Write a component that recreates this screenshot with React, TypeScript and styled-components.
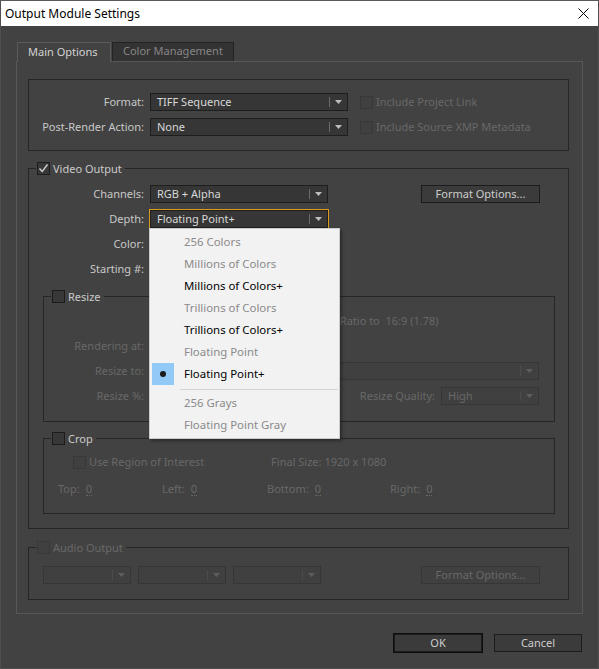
import * as React from 'react'
import styled, { createGlobalStyle, css } from 'styled-components'

const FONT = `'Noto Sans', 'Open Sans', sans-serif`

const GlobalStyle = createGlobalStyle`
  html, body {
    margin: 0;
    padding: 0;
    background: #424242;
  }
  body {
    font-family: ${FONT};
    font-size: 11px;
  }
`

const Window = styled.div`
  width: 599px;
  height: 669px;
  box-sizing: border-box;
  border: 1px solid #4f4f4f;
  border-top-color: #5a5a5a;
  background: #424242;
  display: flex;
  flex-direction: column;
  overflow: hidden;
`

const TitleBar = styled.div`
  height: 25px;
  flex: none;
  background: #ffffff;
  display: flex;
  align-items: center;
  justify-content: space-between;
  padding-left: 4px;
  color: #000;
  font-size: 12px;
`

const CloseIcon = styled.svg`
  margin-right: 9px;
`

const Body = styled.div`
  flex: 1;
  display: flex;
  flex-direction: column;
  padding: 16px 15px 0 15px;
`

const Tabs = styled.div`
  display: flex;
  align-items: flex-start;
  gap: 1px;
  margin-left: 1px;
  margin-bottom: -1px;
  position: relative;
  z-index: 1;
`

const Tab = styled.div<{ $active?: boolean; $w: number }>`
  box-sizing: border-box;
  width: ${(p) => p.$w}px;
  padding-left: 10px;
  font-size: 11px;
  ${(p) =>
    p.$active
      ? css`
          height: 20px;
          line-height: 17px;
          background: #424242;
          color: #d2d2d2;
          border: 1px solid #5a5a5a;
          border-bottom: none;
        `
      : css`
          height: 19px;
          line-height: 16px;
          background: #333333;
          color: #868686;
          border: 1px solid #232323;
          border-bottom: none;
        `}
`

const Panel = styled.div`
  border: 1px solid #575757;
  padding: 17px 13px 13px 11px;
  display: flex;
  flex-direction: column;
`

const Group = styled.div<{ $mt?: number; $mx?: boolean }>`
  position: relative;
  border: 1px solid #262626;
  margin-top: ${(p) => p.$mt ?? 0}px;
  ${(p) =>
    p.$mx &&
    css`
      margin-left: 14px;
      margin-right: 13px;
    `}
`

const Legend = styled.div`
  position: absolute;
  top: -7px;
  left: 7px;
  display: flex;
  align-items: center;
  gap: 3px;
  padding: 0 3px 0 1px;
  background: #424242;
  height: 13px;
`

const GroupBody = styled.div<{ $pt: number; $pb: number; $gap?: number }>`
  display: flex;
  flex-direction: column;
  gap: ${(p) => p.$gap ?? 7}px;
  padding-top: ${(p) => p.$pt}px;
  padding-bottom: ${(p) => p.$pb}px;
`

const Row = styled.div<{ $pl?: number; $pr?: number; $h?: number }>`
  display: flex;
  align-items: center;
  height: ${(p) => p.$h ?? 18}px;
  padding-left: ${(p) => p.$pl ?? 0}px;
  padding-right: ${(p) => p.$pr ?? 0}px;
  line-height: 14px;
`

const Label = styled.div<{ $w?: number; $disabled?: boolean }>`
  ${(p) =>
    p.$w &&
    css`
      width: ${p.$w}px;
      text-align: right;
      margin-right: 6px;
    `}
  flex: none;
  white-space: nowrap;
  padding-bottom: 1px;
  color: ${(p) => (p.$disabled ? '#686868' : '#c8c8c8')};
`

const Text = styled.span<{ $disabled?: boolean; $ml?: number }>`
  white-space: nowrap;
  margin-left: ${(p) => p.$ml ?? 0}px;
  padding-bottom: 1px;
  color: ${(p) => (p.$disabled ? '#686868' : '#cbcbcb')};
`

const SelectBox = styled.div<{ $w: number; $disabled?: boolean; $focused?: boolean; $ml?: number }>`
  position: relative;
  box-sizing: border-box;
  width: ${(p) => p.$w}px;
  height: 18px;
  flex: none;
  display: flex;
  align-items: center;
  margin-left: ${(p) => p.$ml ?? 0}px;
  border: 1px solid ${(p) => (p.$disabled ? '#363636' : '#1e1e1e')};
  background: ${(p) => (p.$disabled ? '#404040' : '#363636')};
  color: ${(p) => (p.$disabled ? '#686868' : '#d8d8d8')};
  ${(p) =>
    p.$focused &&
    css`
      box-shadow: 0 0 0 1px #d99c1a;
    `}
`

const SelectValue = styled.span`
  flex: 1;
  padding-left: 6px;
  padding-bottom: 1px;
  white-space: nowrap;
  overflow: hidden;
`

const SelectArrow = styled.div<{ $disabled?: boolean }>`
  width: 16px;
  height: 10px;
  display: flex;
  align-items: center;
  justify-content: center;
  border-left: 1px solid ${(p) => (p.$disabled ? '#4c4c4c' : '#6a6a6a')};
  margin-right: 1px;
`

const Button = styled.div<{ $w: number; $disabled?: boolean; $default?: boolean }>`
  box-sizing: border-box;
  width: ${(p) => p.$w}px;
  height: 18px;
  flex: none;
  display: flex;
  align-items: center;
  justify-content: center;
  padding-bottom: 1px;
  border: 1px solid ${(p) => (p.$disabled ? '#363636' : '#1c1c1c')};
  background: ${(p) => (p.$disabled ? '#404040' : '#3b3b3b')};
  color: ${(p) => (p.$disabled ? '#686868' : '#cdcdcd')};
  ${(p) =>
    p.$default &&
    css`
      box-shadow: 0 0 0 1px #0e0e0e;
    `}
`

const Box = styled.div<{ $disabled?: boolean }>`
  box-sizing: border-box;
  width: 13px;
  height: 13px;
  flex: none;
  display: flex;
  align-items: center;
  justify-content: center;
  border: 1px solid ${(p) => (p.$disabled ? '#383838' : '#1c1c1c')};
  background: ${(p) => (p.$disabled ? '#404040' : '#383838')};
`

const Spacer = styled.div`
  flex: 1;
`

const NumValue = styled.span`
  margin-left: 6px;
  color: #686868;
  border-bottom: 1px dotted #686868;
  line-height: 13px;
`

const CropCells = styled.div`
  display: flex;
  align-items: center;
  padding-left: 14px;
  height: 16px;
`

const CropCell = styled.div<{ $w: number }>`
  width: ${(p) => p.$w}px;
  flex: none;
  display: flex;
  align-items: center;
`

const MenuWrap = styled.div`
  position: absolute;
  top: calc(100% + 1px);
  left: -2px;
  width: 191px;
  box-sizing: border-box;
  background: #f2f2f2;
  border: 1px solid #cccccc;
  box-shadow: 2px 2px 3px rgba(0, 0, 0, 0.35);
  padding: 2px 0 2px 0;
  z-index: 10;
  font-size: 11.4px;
`

const MenuItem = styled.div<{ $enabled?: boolean }>`
  height: 22px;
  display: flex;
  align-items: center;
  color: ${(p) => (p.$enabled ? '#000000' : '#8a8a8a')};
`

const MenuCheck = styled.div<{ $on?: boolean }>`
  width: 22px;
  height: 22px;
  margin-left: 2px;
  margin-right: 10px;
  display: flex;
  align-items: center;
  justify-content: center;
  background: ${(p) => (p.$on ? '#91c9f7' : 'transparent')};
`

const Dot = styled.div`
  width: 6px;
  height: 6px;
  border-radius: 50%;
  background: #1a1a1a;
`

const MenuSep = styled.div`
  height: 7px;
  margin: 0 1px 0 30px;
  position: relative;
  &::after {
    content: '';
    position: absolute;
    left: 0;
    right: 0;
    top: 4px;
    border-top: 1px solid #d4d4d4;
  }
`

const Footer = styled.div`
  display: flex;
  justify-content: flex-end;
  gap: 12px;
  margin-top: 20px;
  margin-right: 1px;
`

function Arrow({ disabled }: { disabled?: boolean }) {
  return (
    <svg width="7" height="4" viewBox="0 0 7 4">
      <polygon points="0,0 7,0 3.5,4" fill={disabled ? '#5e5e5e' : '#bdbdbd'} />
    </svg>
  )
}

function Select(props: {
  w: number
  value?: string
  disabled?: boolean
  focused?: boolean
  ml?: number
  children?: React.ReactNode
}) {
  return (
    <SelectBox $w={props.w} $disabled={props.disabled} $focused={props.focused} $ml={props.ml}>
      <SelectValue>{props.value}</SelectValue>
      <SelectArrow $disabled={props.disabled}>
        <Arrow disabled={props.disabled} />
      </SelectArrow>
      {props.children}
    </SelectBox>
  )
}

function Check({ checked, disabled }: { checked?: boolean; disabled?: boolean }) {
  return (
    <Box $disabled={disabled}>
      {checked && (
        <svg width="11" height="11" viewBox="0 0 11 11">
          <path d="M1.5 5.5 L4.2 8.5 L9.5 1.5" fill="none" stroke="#cfcfcf" strokeWidth="1.4" />
        </svg>
      )}
    </Box>
  )
}

const depthItems: { label: string; enabled?: boolean; sep?: boolean; selected?: boolean }[] = [
  { label: '256 Colors' },
  { label: 'Millions of Colors' },
  { label: 'Millions of Colors+', enabled: true },
  { label: 'Trillions of Colors' },
  { label: 'Trillions of Colors+', enabled: true },
  { label: 'Floating Point' },
  { label: 'Floating Point+', enabled: true, selected: true },
  { label: '', sep: true },
  { label: '256 Grays' },
  { label: 'Floating Point Gray' },
]

function DepthMenu() {
  return (
    <MenuWrap>
      {depthItems.map((it, i) =>
        it.sep ? (
          <MenuSep key={i} />
        ) : (
          <MenuItem key={i} $enabled={it.enabled}>
            <MenuCheck $on={it.selected}>{it.selected && <Dot />}</MenuCheck>
            {it.label}
          </MenuItem>
        )
      )}
    </MenuWrap>
  )
}

export default function App() {
  return (
    <>
      <GlobalStyle />
      <Window>
        <TitleBar>
          <span>Output Module Settings</span>
          <CloseIcon width="11" height="11" viewBox="0 0 11 11">
            <path d="M0.5 0.5 L10.5 10.5 M10.5 0.5 L0.5 10.5" stroke="#000" strokeWidth="1" />
          </CloseIcon>
        </TitleBar>

        <Body>
          <Tabs>
            <Tab $active $w={94}>Main Options</Tab>
            <Tab $w={122}>Color Management</Tab>
          </Tabs>

          <Panel>
            {/* format / post-render */}
            <Group>
              <GroupBody $pt={13} $pb={14}>
                <Row>
                  <Label $w={115}>Format:</Label>
                  <Select w={198} value="TIFF Sequence" />
                  <Box $disabled style={{ marginLeft: 12 }} />
                  <Text $disabled $ml={3}>Include Project Link</Text>
                </Row>
                <Row>
                  <Label $w={115}>Post-Render Action:</Label>
                  <Select w={198} value="None" />
                  <Box $disabled style={{ marginLeft: 12 }} />
                  <Text $disabled $ml={3}>Include Source XMP Metadata</Text>
                </Row>
              </GroupBody>
            </Group>

            {/* video output */}
            <Group $mt={17}>
              <Legend>
                <Check checked />
                <Text>Video Output</Text>
              </Legend>
              <GroupBody $pt={16} $pb={14}>
                <Row $pr={28}>
                  <Label $w={115}>Channels:</Label>
                  <Select w={178} value="RGB + Alpha" />
                  <Spacer />
                  <Button $w={119}>Format Options...</Button>
                </Row>
                <Row>
                  <Label $w={115}>Depth:</Label>
                  <Select w={178} value="Floating Point+" focused>
                    <DepthMenu />
                  </Select>
                </Row>
                <Row>
                  <Label $w={115}>Color:</Label>
                  <Select w={178} />
                </Row>
                <Row>
                  <Label $w={115}>Starting #:</Label>
                </Row>

                <Group $mt={11} $mx>
                  <Legend>
                    <Check />
                    <Text>Resize</Text>
                  </Legend>
                  <GroupBody $pt={15} $pb={16}>
                    <Row $pl={215}>
                      <Box $disabled />
                      <Text $disabled $ml={4}>Lock Aspect Ratio to&nbsp; 16:9 (1.78)</Text>
                    </Row>
                    <Row>
                      <Label $w={100} $disabled>Rendering at:</Label>
                    </Row>
                    <Row>
                      <Label $w={100} $disabled>Resize to:</Label>
                      <Select w={389} disabled />
                    </Row>
                    <Row $pr={15}>
                      <Label $w={100} $disabled>Resize %:</Label>
                      <Spacer />
                      <Label $disabled>Resize Quality:</Label>
                      <Select w={98} disabled value="High" ml={6} />
                    </Row>
                  </GroupBody>
                </Group>

                <Group $mt={9} $mx>
                  <Legend>
                    <Check />
                    <Text>Crop</Text>
                  </Legend>
                  <GroupBody $pt={17} $pb={16} $gap={12}>
                    <Row $pl={29} $h={13}>
                      <Box $disabled />
                      <Text $disabled $ml={3}>Use Region of Interest</Text>
                      <Text $disabled $ml={67}>Final Size: 1920 x 1080</Text>
                    </Row>
                    <CropCells>
                      <CropCell $w={104}><Text $disabled>Top:</Text><NumValue>0</NumValue></CropCell>
                      <CropCell $w={105}><Text $disabled>Left:</Text><NumValue>0</NumValue></CropCell>
                      <CropCell $w={123}><Text $disabled>Bottom:</Text><NumValue>0</NumValue></CropCell>
                      <CropCell $w={80}><Text $disabled>Right:</Text><NumValue>0</NumValue></CropCell>
                    </CropCells>
                  </GroupBody>
                </Group>
              </GroupBody>
            </Group>

            {/* audio output */}
            <Group $mt={18}>
              <Legend>
                <Check disabled />
                <Text $disabled>Audio Output</Text>
              </Legend>
              <GroupBody $pt={18} $pb={15}>
                <Row $pl={14} $pr={28} style={{ gap: 7 }}>
                  <Select w={88} disabled />
                  <Select w={88} disabled />
                  <Select w={88} disabled />
                  <Spacer />
                  <Button $w={119} $disabled>Format Options...</Button>
                </Row>
              </GroupBody>
            </Group>
          </Panel>

          <Footer>
            <Button $w={88} $default>OK</Button>
            <Button $w={88}>Cancel</Button>
          </Footer>
        </Body>
      </Window>
    </>
  )
}
